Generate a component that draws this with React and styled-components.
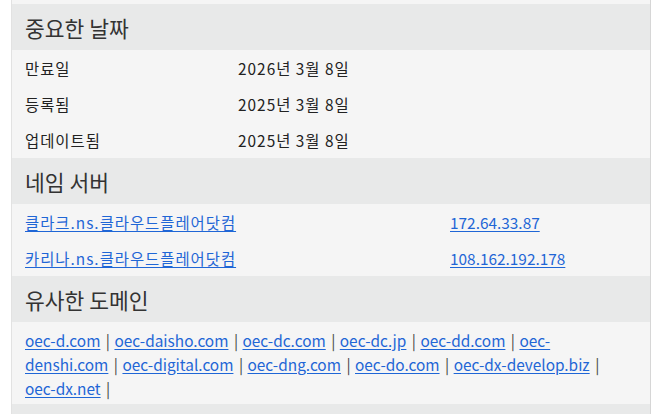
import React from 'react';
import styled, { createGlobalStyle } from 'styled-components';

const Global = createGlobalStyle`
  html, body {
    margin: 0;
    padding: 0;
    background: #fff;
  }
  body {
    font-family: "Noto Sans CJK KR", "Noto Sans", sans-serif;
    color: #222;
  }
`;

const Panel = styled.div`
  margin-left: 11px;
  width: 640px;
  border-left: 1px solid #e2e2e2;
  border-right: 1px solid #d6d6d6;
  background: #f5f5f5;
  padding-top: 4px;
  height: 414px;
  overflow: hidden;
  box-sizing: border-box;
`;

const Header = styled.div`
  height: 46px;
  display: flex;
  align-items: center;
  padding-left: 13px;
  background: #e8e9e9;
  font-size: 21.5px;
  color: #333;
`;

const Row = styled.div`
  height: 36px;
  display: grid;
  grid-template-columns: ${p => p.$cols};
  align-items: center;
  padding-left: 13px;
  font-size: 15.4px;
  color: #222;
  background: #f5f5f5;
`;

const Cell = styled.span`
  letter-spacing: ${p => (p.$ko ? '1px' : '0')};
  white-space: nowrap;
`;

const Link = styled.a`
  color: #1f66d6;
  text-decoration: underline;
  text-underline-offset: 2px;
  letter-spacing: ${p => (p.$ko ? '1px' : '0')};
`;

const Para = styled.div`
  padding: 6px 30px 4px 13px;
  font-size: 15.4px;
  line-height: 24px;
  color: #333;
`;

const Sep = styled.span`
  margin: 0 1px 0 2px;
  color: #444;
`;

const dates = [
  ['만료일', '2026년 3월 8일'],
  ['등록됨', '2025년 3월 8일'],
  ['업데이트됨', '2025년 3월 8일'],
];

const servers = [
  ['클라크.ns.클라우드플레어닷컴', '172.64.33.87'],
  ['카리나.ns.클라우드플레어닷컴', '108.162.192.178'],
];

const similar = [
  'oec-d.com', 'oec-daisho.com', 'oec-dc.com', 'oec-dc.jp', 'oec-dd.com',
  'oec-denshi.com', 'oec-digital.com', 'oec-dng.com', 'oec-do.com',
  'oec-dx-develop.biz', 'oec-dx.net',
];

export default function App() {
  return (
    <>
      <Global />
      <Panel>
        <Header>중요한 날짜</Header>
        {dates.map(([k, v]) => (
          <Row key={k} $cols="213px 1fr">
            <Cell $ko>{k}</Cell>
            <Cell $ko>{v}</Cell>
          </Row>
        ))}
        <Header>네임 서버</Header>
        {servers.map(([n, ip]) => (
          <Row key={n} $cols="425px 1fr">
            <Cell><Link href="#" $ko>{n}</Link></Cell>
            <Cell><Link href="#">{ip}</Link></Cell>
          </Row>
        ))}
        <Header>유사한 도메인</Header>
        <Para>
          {similar.map(d => (
            <React.Fragment key={d}>
              <Link href="#">{d}</Link>{'\u00a0'}<Sep>|</Sep>{' '}
            </React.Fragment>
          ))}
        </Para>
        <Header />
      </Panel>
    </>
  );
}
